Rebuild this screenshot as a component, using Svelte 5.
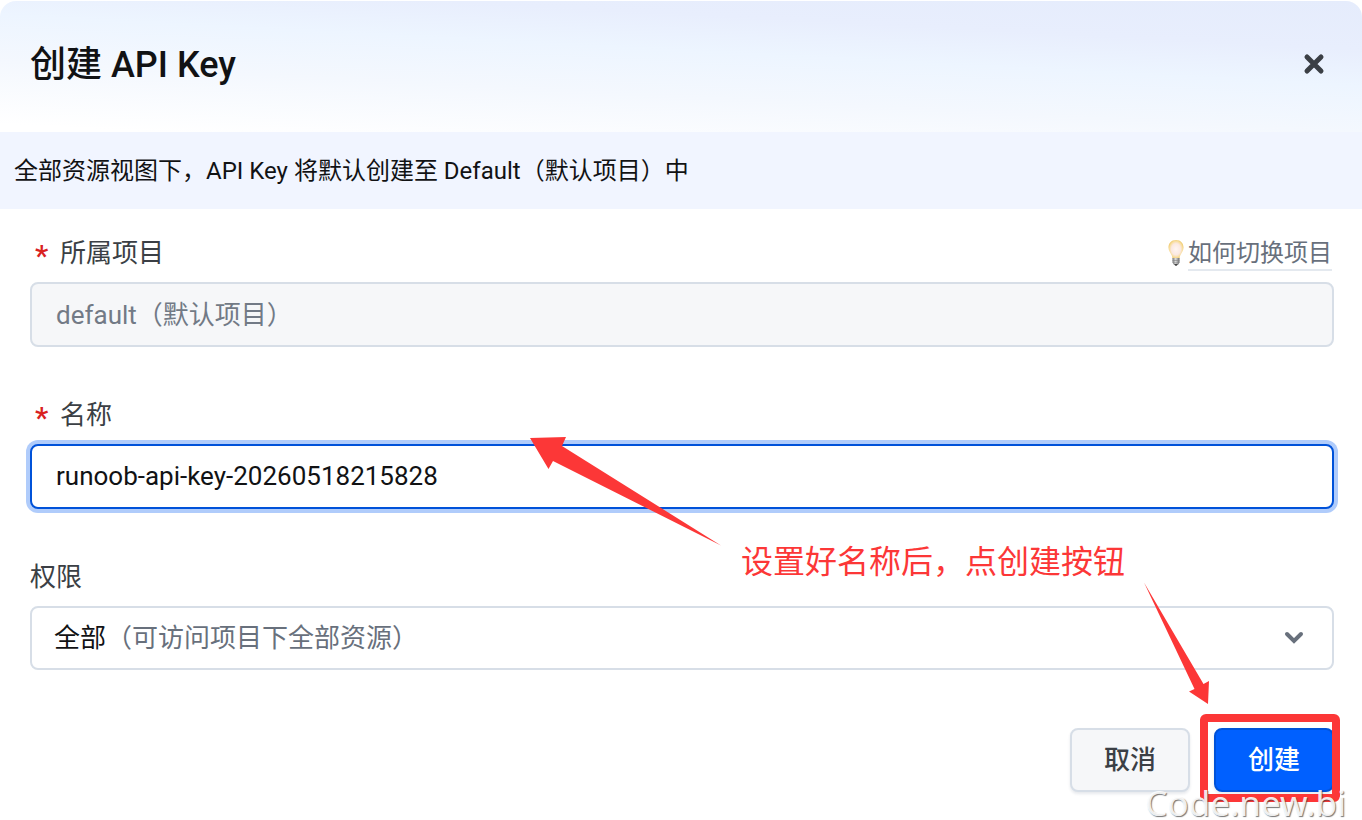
<script>
  let name = $state('runoob-api-key-20260518215828');
  let scope = $state('all');
</script>

<div class="dialog" role="dialog" aria-labelledby="dialog-title">
  <header>
    <h1 id="dialog-title">创建 API Key</h1>
    <button class="close" type="button" aria-label="关闭">
      <svg viewBox="0 0 24 24" width="24" height="24" aria-hidden="true">
        <path d="M5 4 19 18M19 4 5 18" />
      </svg>
    </button>
  </header>

  <p class="notice">全部资源视图下，API Key 将默认创建至 Default（默认项目）中</p>

  <form onsubmit={(e) => e.preventDefault()}>
    <div class="field">
      <div class="label-row">
        <label for="project"><span class="star">*</span>所属项目</label>
        <div class="help">
          <svg viewBox="0 0 18 28" width="18" height="28" aria-hidden="true">
            <defs>
              <radialGradient id="glass" cx="50%" cy="50%" r="55%">
                <stop offset="0" stop-color="#fff6f0" />
                <stop offset="0.55" stop-color="#fbe9e2" />
                <stop offset="0.8" stop-color="#f8dd9c" />
                <stop offset="1" stop-color="#ecc25c" />
              </radialGradient>
              <linearGradient id="cap">
                <stop offset="0" stop-color="#77787a" />
                <stop offset="0.45" stop-color="#dcdcdc" />
                <stop offset="1" stop-color="#68696b" />
              </linearGradient>
            </defs>
            <path d="M9 1C4.300 1 1.500 4.300 1.500 8.500c0 4.500 3.600 6.200 4 11h7c.4-4.800 4-6.500 4-11C16.500 4.300 13.700 1 9 1z" fill="url(#glass)" />
            <path d="M5.500 19h7v4.500L11 26H7l-1.500-2.500z" fill="url(#cap)" />
            <path d="M5.500 21.500h7M6 23.800h6" stroke="#858585" stroke-width="0.6" />
            <path d="M7.200 25h3.600l-1 1.800H8.200z" fill="#454545" />
          </svg>
          <a href="#switch">如何切换项目</a>
        </div>
      </div>
      <input id="project" type="text" value="default（默认项目）" disabled />
    </div>

    <div class="field">
      <div class="label-row">
        <label for="name"><span class="star">*</span>名称</label>
      </div>
      <input id="name" class="active" type="text" bind:value={name} />
    </div>

    <div class="field">
      <div class="label-row">
        <label for="scope">权限</label>
      </div>
      <div class="select">
        <select id="scope" bind:value={scope} aria-describedby="scope-hint">
          <option value="all">全部</option>
        </select>
        <span id="scope-hint" class="hint">（可访问项目下全部资源）</span>
        <svg viewBox="0 0 24 24" width="24" height="24" aria-hidden="true">
          <path d="M5 8 12 15 19 8" />
        </svg>
      </div>
    </div>

    <footer>
      <button class="btn" type="button">取消</button>
      <div class="marked">
        <button class="btn primary" type="submit">创建</button>
      </div>
    </footer>
  </form>

  <svg class="arrows" width="1362" height="818" viewBox="0 1 1362 818" aria-hidden="true">
    <polygon points="530,438 566,437 562,446 721,545.500 553,461 548.500,469" />
    <polygon points="1144,582.500 1203.500,684 1209,681 1208,704 1189,691.500 1194.500,689" />
  </svg>
  <p class="note">设置好名称后，点创建按钮</p>
  <span class="watermark">Code.new.bi</span>
</div>

<style>
  :global(body) {
    margin: 0;
    background: #fff;
  }

  .dialog {
    position: relative;
    margin-top: 1px;
    border-radius: 16px;
    background: #fff;
    color: #111214;
    font-family: Roboto, 'Noto Sans CJK SC', sans-serif;
    font-size: 26px;
    line-height: 38px;
  }

  header {
    display: flex;
    align-items: center;
    justify-content: space-between;
    padding: 38px 36px 41px 30px;
    border-radius: 16px 16px 0 0;
    background: linear-gradient(183deg, #e5ecfc 0%, #e8eefd 24%, #edf5ff 42%, #f4f8fe 65%, #fff 96%);
  }

  h1 {
    margin: 0;
    font-size: 36px;
    line-height: 52px;
    font-weight: 500;
  }

  button,
  input,
  select {
    font: inherit;
    box-sizing: border-box;
  }

  .close {
    display: flex;
    padding: 0;
    border: 0;
    background: none;
    cursor: pointer;
  }

  .close path {
    fill: none;
    stroke: #3b3f45;
    stroke-width: 5;
    stroke-linecap: round;
  }

  .notice {
    margin: 0;
    padding: 20px 14px 19px;
    background: #f1f5ff;
    font-size: 24px;
  }

  form {
    display: flex;
    flex-direction: column;
    gap: 49px;
    padding: 25px 28px 26px 30px;
  }

  .field {
    display: flex;
    flex-direction: column;
    gap: 10px;
  }

  .label-row {
    display: flex;
    align-items: center;
    justify-content: space-between;
    color: #3b3f45;
  }

  label {
    display: flex;
  }

  .star {
    width: 30px;
    height: 38px;
    padding: 3px 0 0 5px;
    box-sizing: border-box;
    color: #d9221f;
    font-size: 30px;
    font-weight: 500;
  }

  .help {
    display: flex;
    align-items: center;
    gap: 3px;
    padding-right: 2px;
    font-size: 24px;
  }

  .help a {
    padding-top: 2px;
    border-bottom: 2px solid #e4e9ef;
    color: #68707c;
    line-height: 32px;
    text-decoration: none;
  }

  input,
  select {
    width: 100%;
    height: 65px;
    padding: 0 24px 2px;
    border: 2px solid #d7dee7;
    border-radius: 8px;
    background: #fff;
    color: #111214;
    outline: none;
  }

  input:disabled {
    padding-bottom: 4px;
    background: #f6f7f9;
    color: #727a86;
  }

  .active {
    border-color: #0052d9;
    box-shadow: 0 0 0 4px #b0ccfb;
  }

  .select {
    position: relative;
    display: flex;
    align-items: center;
  }

  select {
    height: 64px;
    padding: 0 22px;
    appearance: none;
  }

  .hint {
    position: absolute;
    left: 76px;
    color: #68707c;
    pointer-events: none;
  }

  .select svg {
    position: absolute;
    right: 28px;
    pointer-events: none;
  }

  .select path {
    fill: none;
    stroke: #68707c;
    stroke-width: 4;
    stroke-linecap: round;
  }

  footer {
    display: flex;
    justify-content: flex-end;
    gap: 24px;
    padding-top: 9px;
  }

  .btn {
    width: 120px;
    height: 64px;
    padding: 0;
    border: 2px solid #d7dee7;
    border-radius: 8px;
    background: #f6f7f9;
    box-shadow: 0 2px 3px rgba(20, 40, 80, 0.1);
    color: #3b3f45;
    font-weight: 500;
    cursor: pointer;
  }

  .primary {
    display: block;
    border-color: #0052d9;
    background: #0060ff;
    color: #fff;
  }

  .marked {
    position: relative;
  }

  .marked::after {
    content: '';
    position: absolute;
    inset: -14px -6px -10px -14px;
    border: 8px solid #fc3737;
    border-radius: 6px;
    pointer-events: none;
  }

  .arrows {
    position: absolute;
    top: 0;
    left: 0;
    fill: #fc3737;
    pointer-events: none;
  }

  .note {
    position: absolute;
    top: 537px;
    left: 741px;
    margin: 0;
    color: #fc3737;
    font-size: 32px;
    line-height: 48px;
    pointer-events: none;
  }

  .watermark {
    position: absolute;
    right: 16px;
    bottom: 0;
    color: rgba(255, 255, 255, 0.9);
    font-family: 'Noto Sans', sans-serif;
    font-size: 35px;
    line-height: 30px;
    text-shadow: 1px 1px 1px rgba(60, 60, 60, 0.7);
    pointer-events: none;
  }
</style>
